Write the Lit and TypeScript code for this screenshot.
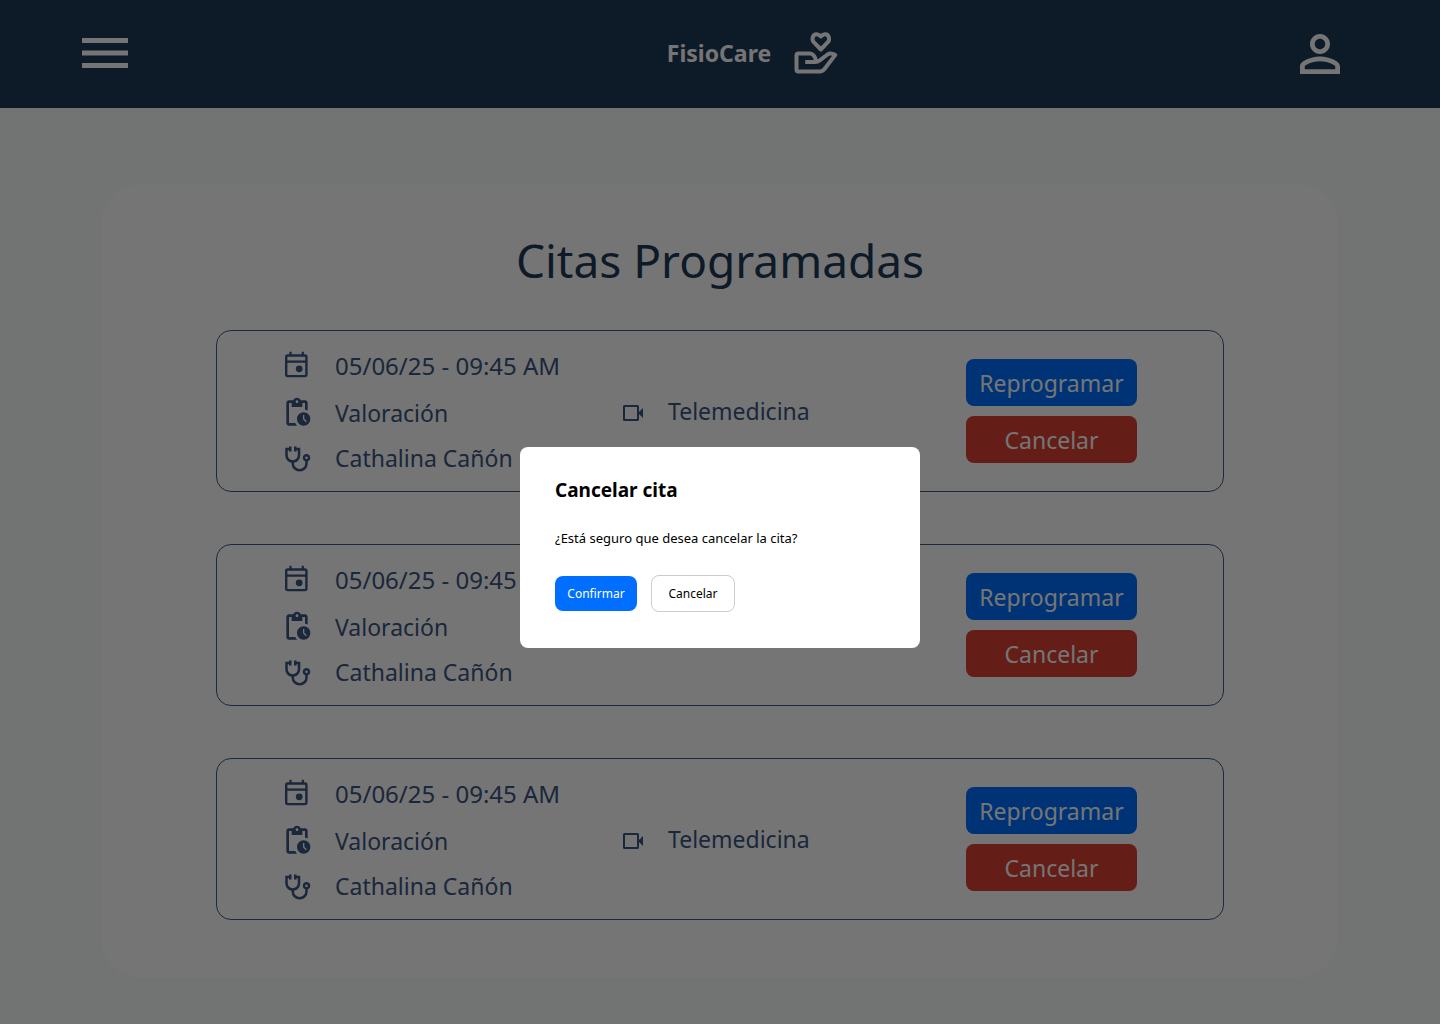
import { LitElement, html, css, svg } from "lit";
import { customElement, property, state } from "lit/decorators.js";

interface Appointment {
  when: string;
  kind: string;
  specialist: string;
  mode: string;
}

const calendarIcon = svg`<svg class="icon" viewBox="0 1.500 32 32" aria-hidden="true">
  <rect x="5.200" y="7" width="20.200" height="20.600" rx="1.500" fill="none" stroke="currentColor" stroke-width="2.400"/>
  <path d="M5 13.200h20.400M9.500 3.300V7M21.800 3.300V7" fill="none" stroke="currentColor" stroke-width="2.200"/>
  <circle cx="18.200" cy="20.300" r="3.400" fill="currentColor"/>
</svg>`;

const pendingIcon = svg`<svg class="icon" viewBox="0 .500 24 24" aria-hidden="true">
  <path fill="currentColor" d="M17 12c-2.760 0-5 2.240-5 5s2.240 5 5 5 5-2.240 5-5-2.240-5-5-5zm1.650 7.350L16.500 17.200V14h1v2.790l1.850 1.850-.7.710zM18 3h-3.180C14.400 1.840 13.300 1 12 1s-2.400.84-2.820 2H6c-1.100 0-2 .9-2 2v15c0 1.100.9 2 2 2h6.110a6.743 6.743 0 0 1-1.420-2H6V5h2v3h8V5h2v5.080c.71.1 1.380.31 2 .6V5c0-1.100-.9-2-2-2zm-6 2c-.55 0-1-.45-1-1s.45-1 1-1 1 .45 1 1-.45 1-1 1z"/>
</svg>`;

const stethoscopeIcon = svg`<svg class="icon" viewBox="-56 -1024 1024 1024" aria-hidden="true">
  <path fill="currentColor" d="M540-80q-108 0-184-76t-76-184v-23q-86-14-143-80.500T80-600v-240h120v-40h80v160h-80v-40h-40v160q0 66 47 113t113 47q66 0 113-47t47-113v-160h-40v40h-80v-160h80v40h120v240q0 90-57 156.500T360-363v23q0 75 52.500 127.500T540-160q75 0 127.500-52.500T720-340v-67q-35-12-57.500-43T640-520q0-50 35-85t85-35q50 0 85 35t35 85q0 39-22.500 70T800-407v67q0 108-76 184T540-80Zm220-400q17 0 28.500-11.500T800-520q0-17-11.500-28.500T760-560q-17 0-28.500 11.500T720-520q0 17 11.500 28.500T760-480Z"/>
</svg>`;

const videoIcon = svg`<svg class="icon narrow" viewBox="0 0 26 32" aria-hidden="true">
  <rect x="4" y="11" width="14" height="14" rx=".5" fill="none" stroke="currentColor" stroke-width="2"/>
  <path d="M18 18l5-5v10z" fill="currentColor"/>
</svg>`;

@customElement("appointment-card")
export class AppointmentCard extends LitElement {
  @property({ attribute: false }) item!: Appointment;

  static styles = css`
    :host {
      display: grid;
      grid-template-columns: 339fr 346fr auto;
      align-items: center;
      padding: 12px 86px 12px 64px;
      border: 1px solid #3b5c84;
      border-radius: 15px;
      color: #3b5580;
      font-size: 23px;
      line-height: 32px;
    }
    .details {
      display: grid;
      grid-template-rows: 46px 48px 42px;
      margin: 0;
      padding: 0;
      list-style: none;
    }
    .line {
      display: flex;
      align-items: center;
      gap: 22px;
    }
    .when {
      font-size: 24px;
    }
    .icon {
      flex: none;
      width: 32px;
      height: 32px;
    }
    .narrow {
      width: 26px;
    }
    .actions {
      display: grid;
      gap: 10px;
    }
    .action {
      min-width: 171px;
      height: 47px;
      padding: 0 12px;
      border: 0;
      border-radius: 8px;
      color: #fff;
      font: inherit;
      cursor: pointer;
    }
    .primary {
      background: #006fff;
    }
    .danger {
      background: #d93f34;
    }
  `;

  private requestCancel() {
    this.dispatchEvent(new CustomEvent("cancel-request", { bubbles: true, composed: true }));
  }

  render() {
    const { when, kind, specialist, mode } = this.item;
    return html`
      <ul class="details">
        <li class="line">${calendarIcon}<span class="when">${when}</span></li>
        <li class="line">${pendingIcon}<span>${kind}</span></li>
        <li class="line">${stethoscopeIcon}<span>${specialist}</span></li>
      </ul>
      <div class="line">${videoIcon}<span>${mode}</span></div>
      <div class="actions">
        <button class="action primary" type="button">Reprogramar</button>
        <button class="action danger" type="button" @click=${this.requestCancel}>Cancelar</button>
      </div>
    `;
  }
}

@customElement("app-root")
export class AppRoot extends LitElement {
  @state() private confirming = true;

  private appointments: Appointment[] = Array.from({ length: 3 }, () => ({
    when: "05/06/25 - 09:45 AM",
    kind: "Valoración",
    specialist: "Cathalina Cañón",
    mode: "Telemedicina",
  }));

  static styles = css`
    :host {
      display: block;
      min-height: 100vh;
      background: #f6fcf9;
      font-family: "Noto Sans", "Open Sans", sans-serif;
    }
    .header {
      display: grid;
      grid-template-columns: 1fr auto 1fr;
      align-items: center;
      height: 108px;
      padding: 0 90px 2px 82px;
      box-sizing: border-box;
      background: #1e3a57;
      color: #fff;
    }
    .icon-button {
      display: block;
      padding: 0;
      border: 0;
      background: none;
      color: inherit;
      cursor: pointer;
    }
    .profile {
      justify-self: end;
    }
    .menu-icon,
    .profile-icon,
    .brand-icon {
      display: block;
    }
    .menu-icon {
      width: 46px;
      height: 30px;
    }
    .profile-icon {
      width: 60px;
      height: 60px;
    }
    .brand {
      display: flex;
      align-items: center;
      gap: 22px;
      padding-left: 74px;
      color: inherit;
      font-size: 23px;
      font-weight: 700;
      line-height: 32px;
      text-decoration: none;
    }
    .brand-icon {
      width: 46px;
      height: 44px;
    }
    .panel {
      margin: 76px 102px 46px 101px;
      padding: 44px 114px 58px 115px;
      border-radius: 40px;
      background: #fff;
    }
    .title {
      margin: 0 0 38px;
      color: #1e3a57;
      font-size: 46px;
      font-weight: 400;
      line-height: 64px;
      text-align: center;
    }
    .cards {
      display: grid;
      gap: 52px;
    }
    .overlay {
      position: fixed;
      inset: 0;
      display: flex;
      align-items: center;
      justify-content: center;
      padding-top: 71px;
      background: rgba(0, 0, 0, 0.54);
    }
    .dialog {
      width: 400px;
      box-sizing: border-box;
      padding: 29px 35px 36px;
      border-radius: 8px;
      background: #fff;
      color: #000;
    }
    .dialog-title {
      margin: 0 0 24px;
      font-size: 19px;
      font-weight: 700;
      line-height: 28px;
    }
    .dialog-text {
      margin: 0 0 27px;
      font-size: 13px;
      line-height: 20px;
    }
    .dialog-actions {
      display: flex;
      align-items: center;
      gap: 14px;
    }
    .choice {
      width: 82px;
      height: 35px;
      padding: 0;
      border: 0;
      border-radius: 8px;
      box-sizing: content-box;
      font: inherit;
      font-size: 12px;
      cursor: pointer;
    }
    .confirm {
      background: #006fff;
      color: #fff;
    }
    .dismiss {
      border: 1px solid #cbcbd8;
      background: #fff;
      color: #000;
    }
  `;

  private close() {
    this.confirming = false;
  }

  private open() {
    this.confirming = true;
  }

  render() {
    return html`
      <header class="header">
        <button class="icon-button" type="button" aria-label="Menú">
          <svg class="menu-icon" viewBox="0 0 46 30" aria-hidden="true">
            <path fill="currentColor" d="M0 0h46v5H0zM0 12.500h46v5H0zM0 25h46v5H0z" />
          </svg>
        </button>
        <a class="brand" href="#">
          FisioCare
          <svg class="brand-icon" viewBox="0 0 46 44" aria-hidden="true">
            <g fill="none" stroke="currentColor" stroke-width="4" stroke-linejoin="round">
              <path d="M27.800 18.500l-7-7.300c-2.200-2.400-1.600-7.800 2.700-8 2.200-.1 3.400 1.300 4.300 2.300.9-1 2.100-2.400 4.300-2.300 4.300.2 4.900 5.600 2.700 8z" />
              <path d="M12.200 31H22c2 0 3.400-.5 4.800-1.700l7.700-5.800c2.500-1.900 5-1.200 7.800.4L31.700 37.700c-1.400 1.800-2.700 2.700-4.700 2.700H5.500c-1.200 0-2-.8-2-2V24.500c0-1.200.8-2 2-2H17c2.600 0 5.400 2.800 6 7.700" />
            </g>
          </svg>
        </a>
        <button class="icon-button profile" type="button" aria-label="Perfil">
          <svg class="profile-icon" viewBox="0 -.400 24 24" aria-hidden="true">
            <path
              fill="currentColor"
              d="M12 5.900c1.160 0 2.100.94 2.100 2.100s-.94 2.100-2.100 2.100S9.900 9.160 9.900 8s.94-2.100 2.100-2.100m0 9c2.970 0 6.100 1.460 6.100 2.100v1.100H5.900V17c0-.64 3.130-2.100 6.100-2.100M12 4C9.790 4 8 5.790 8 8s1.790 4 4 4 4-1.790 4-4-1.790-4-4-4zm0 9c-2.670 0-8 1.340-8 4v3h16v-3c0-2.660-5.330-4-8-4z"
            />
          </svg>
        </button>
      </header>
      <main class="panel">
        <h1 class="title">Citas Programadas</h1>
        <div class="cards" @cancel-request=${this.open}>
          ${this.appointments.map((item) => html`<appointment-card .item=${item}></appointment-card>`)}
        </div>
      </main>
      ${this.confirming
        ? html`<div class="overlay">
            <div class="dialog" role="dialog" aria-modal="true" aria-labelledby="dialog-title">
              <h2 class="dialog-title" id="dialog-title">Cancelar cita</h2>
              <p class="dialog-text">¿Está seguro que desea cancelar la cita?</p>
              <div class="dialog-actions">
                <button class="choice confirm" type="button" @click=${this.close}>Confirmar</button>
                <button class="choice dismiss" type="button" @click=${this.close}>Cancelar</button>
              </div>
            </div>
          </div>`
        : null}
    `;
  }
}
